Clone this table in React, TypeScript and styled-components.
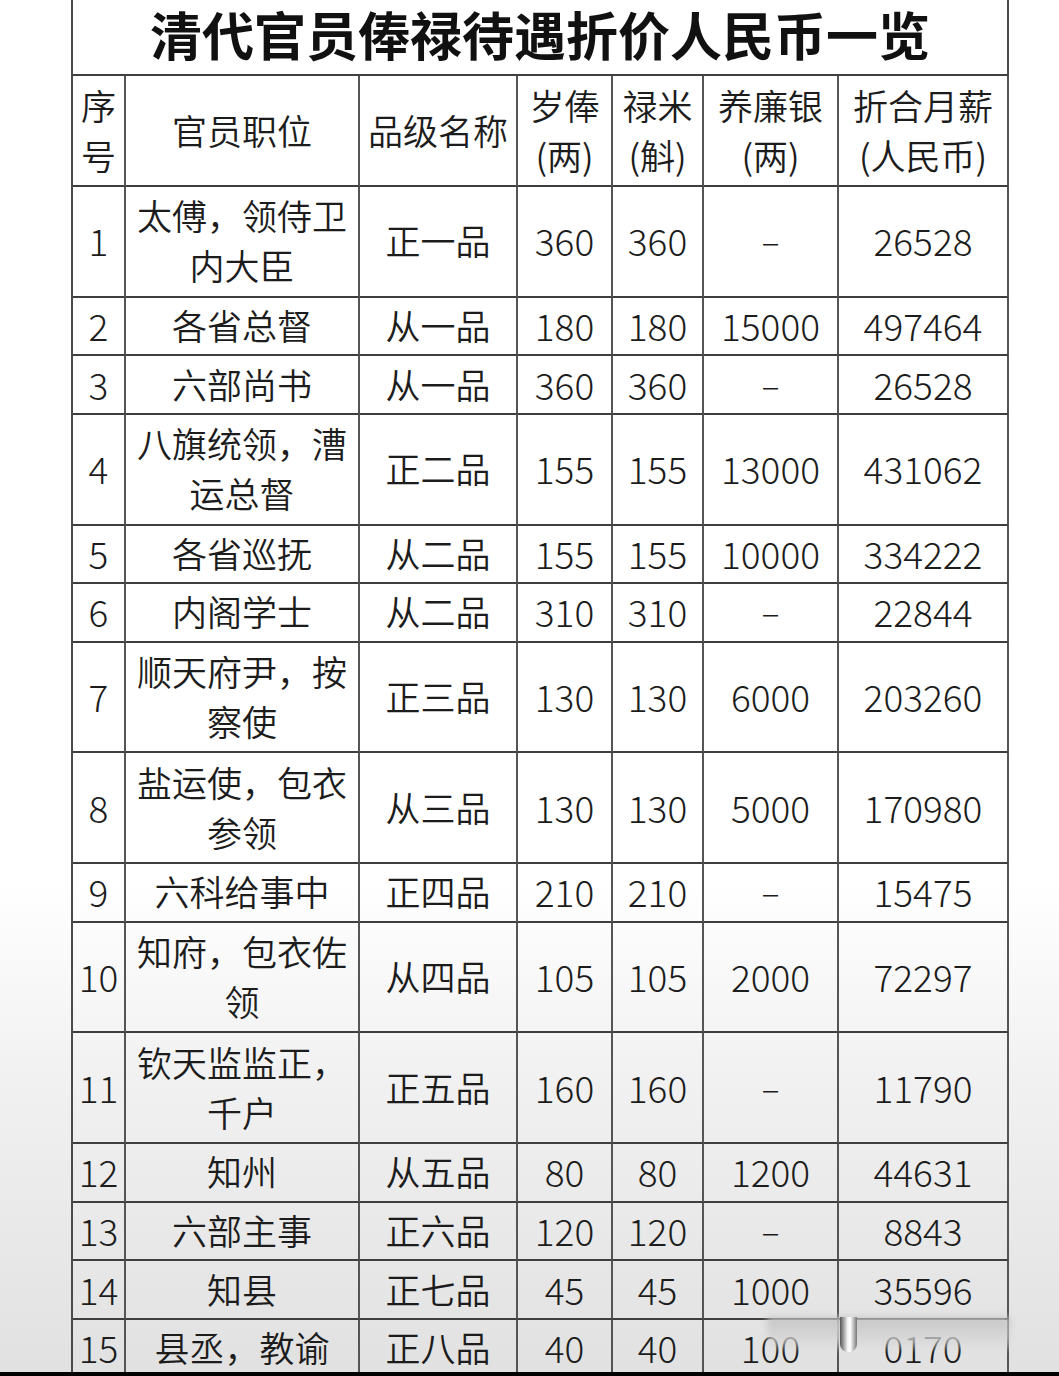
import React from 'react';
import styled, { createGlobalStyle } from 'styled-components';

const GlobalStyle = createGlobalStyle`
    html, body {
        margin: 0;
        padding: 0;
    }
    body {
        font-family: "Noto Sans CJK SC", "Noto Sans", sans-serif;
        color: #1c1c1c;
    }
`;

const Page = styled.div`
    position: relative;
    width: 1059px;
    height: 1376px;
    overflow: hidden;
    display: flex;
    flex-direction: column;
    background: linear-gradient(180deg, #ffffff 0px, #ffffff 880px, #f1f1f1 1080px, #e1e1e1 1372px);
`;

const Sheet = styled.div`
    flex: 1;
    overflow: hidden;
    padding-left: 71px;
`;

const Grid = styled.div`
    display: grid;
    grid-template-columns: 53px 234px 158px 95px 91px 135px 170px;
    width: 936px;
    border-left: 2px solid #4a4a4a;
`;

const Title = styled.div`
    grid-column: 1 / -1;
    height: 76px;
    box-sizing: border-box;
    padding-top: 4px;
    border-right: 2px solid #4a4a4a;
    border-bottom: 2px solid #3e3e3e;
    display: flex;
    justify-content: center;
    align-items: flex-start;
    font-size: 52px;
    font-weight: 700;
    line-height: 60px;
    color: #111;
`;

const Cell = styled.div<{ $tall?: boolean; $head?: boolean }>`
    height: ${(p) => (p.$head ? '111px' : p.$tall ? '110.7px' : '58.6px')};
    box-sizing: border-box;
    border-right: 2px solid #555;
    border-bottom: 2px solid #3e3e3e;
    display: flex;
    flex-direction: column;
    justify-content: center;
    align-items: center;
    text-align: center;
    font-size: 35px;
    font-weight: 350;
    line-height: 50px;
    white-space: nowrap;
    padding-bottom: 2px;
`;

const Num = styled.span`
    font-size: 37px;
    font-weight: 300;
`;

const Dash = styled.span`
    font-size: 34px;
    font-weight: 300;
`;

const Smudge = styled.div`
    position: absolute;
    left: 767px;
    top: 1317px;
    width: 243px;
    height: 33px;
    background: linear-gradient(180deg, rgba(196, 196, 196, 0.95), rgba(214, 214, 214, 0.75) 70%, rgba(225, 225, 225, 0.2));
    filter: blur(3px);
`;

const Pill = styled.div`
    position: absolute;
    left: 840px;
    top: 1317px;
    width: 17px;
    height: 35px;
    border-radius: 0 0 8px 8px;
    background: linear-gradient(90deg, #555, #f4f4f4 45%, #fff 60%, #777);
`;

const BottomBar = styled.div`
    height: 4px;
    background: #000;
`;

type Row = {
    no: string;
    post: string[];
    rank: string;
    pay: string;
    rice: string;
    bonus: string;
    monthly: string;
};

const rows: Row[] = [
    { no: '1', post: ['太傅，领侍卫', '内大臣'], rank: '正一品', pay: '360', rice: '360', bonus: '–', monthly: '26528' },
    { no: '2', post: ['各省总督'], rank: '从一品', pay: '180', rice: '180', bonus: '15000', monthly: '497464' },
    { no: '3', post: ['六部尚书'], rank: '从一品', pay: '360', rice: '360', bonus: '–', monthly: '26528' },
    { no: '4', post: ['八旗统领，漕', '运总督'], rank: '正二品', pay: '155', rice: '155', bonus: '13000', monthly: '431062' },
    { no: '5', post: ['各省巡抚'], rank: '从二品', pay: '155', rice: '155', bonus: '10000', monthly: '334222' },
    { no: '6', post: ['内阁学士'], rank: '从二品', pay: '310', rice: '310', bonus: '–', monthly: '22844' },
    { no: '7', post: ['顺天府尹，按', '察使'], rank: '正三品', pay: '130', rice: '130', bonus: '6000', monthly: '203260' },
    { no: '8', post: ['盐运使，包衣', '参领'], rank: '从三品', pay: '130', rice: '130', bonus: '5000', monthly: '170980' },
    { no: '9', post: ['六科给事中'], rank: '正四品', pay: '210', rice: '210', bonus: '–', monthly: '15475' },
    { no: '10', post: ['知府，包衣佐', '领'], rank: '从四品', pay: '105', rice: '105', bonus: '2000', monthly: '72297' },
    { no: '11', post: ['钦天监监正，', '千户'], rank: '正五品', pay: '160', rice: '160', bonus: '–', monthly: '11790' },
    { no: '12', post: ['知州'], rank: '从五品', pay: '80', rice: '80', bonus: '1200', monthly: '44631' },
    { no: '13', post: ['六部主事'], rank: '正六品', pay: '120', rice: '120', bonus: '–', monthly: '8843' },
    { no: '14', post: ['知县'], rank: '正七品', pay: '45', rice: '45', bonus: '1000', monthly: '35596' },
    { no: '15', post: ['县丞，教谕'], rank: '正八品', pay: '40', rice: '40', bonus: '100', monthly: '0170' },
];

const headers: string[][] = [
    ['序', '号'],
    ['官员职位'],
    ['品级名称'],
    ['岁俸', '(两)'],
    ['禄米', '(斛)'],
    ['养廉银', '(两)'],
    ['折合月薪', '(人民币)'],
];

const Lines = ({ lines }: { lines: string[] }) => (
    <>
        {lines.map((l, i) => (
            <span key={i}>{l}</span>
        ))}
    </>
);

const Value = ({ v }: { v: string }) => (v === '–' ? <Dash>{v}</Dash> : <Num>{v}</Num>);

export default function App() {
    return (
        <Page>
            <GlobalStyle />
            <Sheet>
                <Grid>
                    <Title>清代官员俸禄待遇折价人民币一览</Title>
                    {headers.map((h, i) => (
                        <Cell key={'h' + i} $head>
                            <Lines lines={h} />
                        </Cell>
                    ))}
                    {rows.map((r) => {
                        const tall = r.post.length > 1;
                        return (
                            <React.Fragment key={r.no}>
                                <Cell $tall={tall}>
                                    <Num>{r.no}</Num>
                                </Cell>
                                <Cell $tall={tall}>
                                    <Lines lines={r.post} />
                                </Cell>
                                <Cell $tall={tall}>{r.rank}</Cell>
                                <Cell $tall={tall}>
                                    <Value v={r.pay} />
                                </Cell>
                                <Cell $tall={tall}>
                                    <Value v={r.rice} />
                                </Cell>
                                <Cell $tall={tall}>
                                    <Value v={r.bonus} />
                                </Cell>
                                <Cell $tall={tall}>
                                    <Value v={r.monthly} />
                                </Cell>
                            </React.Fragment>
                        );
                    })}
                </Grid>
            </Sheet>
            <BottomBar />
            <Smudge />
            <Pill />
        </Page>
    );
}
